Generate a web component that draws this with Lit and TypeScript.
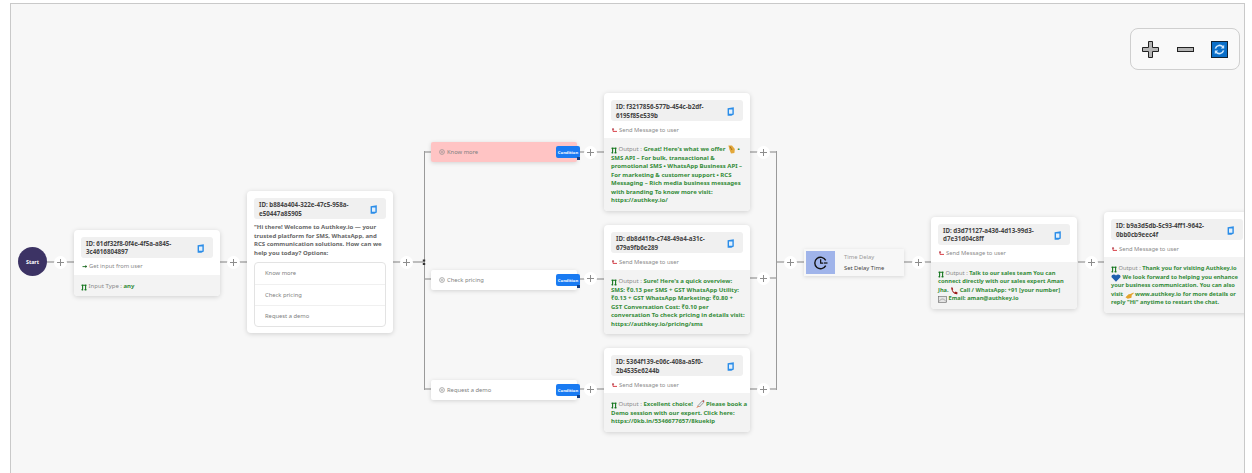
import { LitElement, html, css, svg } from "lit";
import { customElement } from "lit/decorators.js";

const copyIcon = svg`<svg class="copy" width="8" height="9" viewBox="0 0 8 9"><path d="M.6 1.2 L6.8 .2 V7.6 L4.4 8.8 H.6 Z" fill="#2b8de8"/><path d="M2 2.4 H5.4 V6.8 H2 Z" fill="#e3f0fc"/></svg>`;
const sendIcon = svg`<svg class="tiny" width="6" height="5" viewBox="0 0 6 5"><path d="M1 0.8 V3.4 H5" stroke="#d8444c" stroke-width="1" fill="none"/><path d="M1 .1 L2.3 1.5 H-.2 Z" fill="#a31d2a"/></svg>`;
const getIcon = svg`<svg class="tiny" width="6" height="5" viewBox="0 0 6 5"><path d="M.5 2.6 H4" stroke="#2e7d32" stroke-width="1"/><path d="M3.4 1 L5.2 2.6 L3.4 4 Z" fill="#1b5e20"/></svg>`;
const outIcon = svg`<svg class="tiny" width="6" height="7" viewBox="0 0 6 7"><path d="M1.6 .6 V6.4 M4.6 .6 V6.4 M.4 1.2 H5.6 M.4 5.8 H2 M3.4 5.8 H5.6" stroke="#15761f" stroke-width="1.1" fill="none"/></svg>`;
const gearIcon = svg`<svg class="gear" width="6" height="6" viewBox="0 0 7 7"><circle cx="3.5" cy="3.5" r="2.8" fill="none" stroke="#8c8c8c" stroke-width=".8"/><circle cx="3.5" cy="3.5" r="1" fill="none" stroke="#8c8c8c" stroke-width=".6"/></svg>`;
const handIcon = svg`<svg class="emoji" width="9" height="9" viewBox="0 0 9 9"><path d="M1.4 .6 L5 .6 L7.8 4 L7.4 8 L4 8.4 L2.6 5 Z" fill="#e3a83b"/><path d="M3 1.5 L5 5" stroke="#8c5a12" stroke-width=".7"/></svg>`;
const rocketIcon = svg`<svg class="emoji" width="10" height="9" viewBox="0 0 10 9"><path d="M3 5.6 L7 1.2 L9 .6 L8.6 2.6 L4.4 7 Z" fill="#e9ecf0" stroke="#555" stroke-width=".5"/><path d="M7.4 .9 L9 .6 L8.7 2.2 Z" fill="#d33"/><path d="M1.2 8 L3 5.8 L3.9 6.7 Z" fill="#e8622a"/></svg>`;
const phoneIcon = svg`<svg class="emoji" width="8" height="8" viewBox="0 0 8 8"><path d="M1 .6 L2.6 .4 L3.2 2.4 L2.4 3 Q3.2 4.6 4.8 5.4 L5.6 4.6 L7.6 5.4 L7.2 7.2 Q2 7.6 1 .6 Z" fill="#9e1b1b"/></svg>`;
const mailIcon = svg`<svg class="emoji" width="9" height="7" viewBox="0 0 9 7"><rect x=".4" y=".6" width="8.2" height="5.8" fill="#e4e4e4" stroke="#666" stroke-width=".6"/><path d="M.6 5.8 L3.4 3 H5.6 L8.4 5.8" fill="none" stroke="#777" stroke-width=".5"/></svg>`;
const heartIcon = svg`<svg class="emoji" width="10" height="8" viewBox="0 0 10 8"><path d="M5 7.8 L.4 3 Q.2 .6 2.6 .4 Q4.2 .3 5 1.4 Q5.8 .3 7.4 .4 Q9.8 .6 9.6 3 Z" fill="#1f5fae"/></svg>`;
const handRIcon = svg`<svg class="emoji" width="9" height="7" viewBox="0 0 10 8"><path d="M.4 6 L4 2.6 L6 2.4 L9.6 .6 L9.8 1.6 L7.6 3.4 L7.2 6.6 L3 7.6 Z" fill="#e3a32e"/></svg>`;
const clockIcon = svg`<svg width="14" height="14" viewBox="0 0 16 16"><path d="M13.4 5 A6.6 6.6 0 1 0 13.4 11" fill="none" stroke="#111" stroke-width="1.6"/><path d="M7.6 3.8 V8.2 H10.6" fill="none" stroke="#111" stroke-width="1.4"/><path d="M11.4 8 H15.4" stroke="#111" stroke-width="1.4"/></svg>`;

type Msg = { x: number; y: number; id: string[]; sub: any; subText: string; body?: any; small?: boolean };

const messages: Msg[] = [
  { x: 74, y: 229.5, id: ["61df32f8-0f4e-4f5a-a845-", "3c4616804897"], sub: getIcon, subText: "Get input from user",
    body: html`${outIcon} <span class="lab">Input Type : </span><b>any</b>` },
  { x: 604, y: 93, id: ["f3217856-577b-454c-b2df-", "6195f85e539b"], sub: sendIcon, subText: "Send Message to user",
    body: html`${outIcon} <span class="lab">Output : </span><b>Great! Here's what we offer ${handIcon} •<br>SMS API – For bulk, transactional &amp;<br>promotional SMS • WhatsApp Business API –<br>For marketing &amp; customer support • RCS<br>Messaging – Rich media business messages<br>with branding To know more visit:<br>https://authkey.io/</b>` },
  { x: 604, y: 225, id: ["db8d41fa-c748-49a4-a31c-", "679a9fb6e289"], sub: sendIcon, subText: "Send Message to user",
    body: html`${outIcon} <span class="lab">Output : </span><b>Sure! Here's a quick overview:<br>SMS: ₹0.13 per SMS + GST WhatsApp Utility:<br>₹0.13 + GST WhatsApp Marketing: ₹0.80 +<br>GST Conversation Cost: ₹0.10 per<br>conversation To check pricing in details visit:<br>https://authkey.io/pricing/sms</b>` },
  { x: 604, y: 348, id: ["5364f139-e06c-408a-a5f0-", "2b4535e6244b"], sub: sendIcon, subText: "Send Message to user",
    body: html`${outIcon} <span class="lab">Output : </span><b>Excellent choice! ${rocketIcon} Please book a<br>Demo session with our expert. Click here:<br>https://0kb.in/5346677657/8kuekip</b>` },
  { x: 931, y: 216.5, small: true, id: ["d3d71127-a436-4d13-99d3-", "d7e31d04c8ff"], sub: sendIcon, subText: "Send Message to user",
    body: html`${outIcon} <span class="lab">Output : </span><b>Talk to our sales team You can<br>connect directly with our sales expert Aman<br>Jha. ${phoneIcon} Call / WhatsApp: +91 [your number]<br>${mailIcon} Email: aman@authkey.io</b>` },
  { x: 1104, y: 212, small: true, id: ["b9a3d5db-5c93-4ff1-9642-", "0bb0cb9eec4f"], sub: sendIcon, subText: "Send Message to user",
    body: html`${outIcon} <span class="lab">Output : </span><b>Thank you for visiting Authkey.io<br>${heartIcon} We look forward to helping you enhance<br>your business communication. You can also<br>visit ${handRIcon} www.authkey.io for more details or<br>reply "Hi" anytime to restart the chat.</b>` },
];

const conditions = [
  { y: 142, label: "Know more", cls: "cond pink" },
  { y: 270, label: "Check pricing", cls: "cond" },
  { y: 380, label: "Request a demo", cls: "cond" },
];

const pluses: [number, number][] = [
  [60, 262], [233, 262], [406, 262], [590, 152], [590, 278], [590, 389],
  [763, 152], [763, 278], [763, 389], [790, 262], [918, 262], [1091, 262],
];

// coordinates are relative to the page, the canvas sits at (10,3)
const CX = 10;
const CY = 3;

@customElement("app-root")
export class AppRoot extends LitElement {
  static styles = css`
    :host { display: block; width: 1252px; height: 473px; overflow: hidden; background: #fff;
      font-family: "Noto Sans", "Open Sans", sans-serif; }
    .canvas { position: relative; margin: 3px 0 0 10px; width: 1235px; height: 470px; overflow: hidden;
      background: #f7f7f7; border: 1px solid #c9c9c9; border-bottom: 0; box-sizing: border-box; }
    .wires { position: absolute; left: -1px; top: -1px; }
    .node { position: absolute; }
    .start { width: 29px; height: 29px; border-radius: 50%; background: #3c3364; color: #fff;
      display: flex; align-items: center; justify-content: center; font-size: 5.3px; font-weight: 700; }
    .plus { width: 13px; height: 13px; border-radius: 50%; background: #fff; display: flex;
      align-items: center; justify-content: center; }
    .card { width: 146px; background: #fff; border-radius: 4px; box-shadow: 0 1px 5px rgba(0,0,0,.16);
      overflow: hidden; }
    .top { padding: 7px 7px 0; }
    .idbox { background: #f0f0f0; border-radius: 3px; display: flex; align-items: center;
      justify-content: space-between; padding: 3px 8px 1px 5px; font-size: 6.2px; line-height: 8.5px;
      font-weight: 700; color: #444; white-space: nowrap; }
    .copy { flex: none; }
    .sub { font-size: 5.8px; line-height: 9px; color: #8a8a8a; padding: 4.5px 0 3.5px 1px; white-space: nowrap;
      display: flex; align-items: center; gap: 1px; }
    .out { background: #f3f3f3; padding: 7px 7px 6px; font-size: 6px; line-height: 8.5px;
      color: #8a8a8a; white-space: nowrap; }
    .small .out { font-size: 5.72px; }
    .out b { font-weight: 700; color: #338c39; }
    .out .lab { font-weight: 400; }
    .tiny, .emoji { vertical-align: -1px; margin: -2px 0; }
    .prompt { font-size: 6px; line-height: 8.7px; font-weight: 700; color: #666; white-space: nowrap;
      padding: 4px 0 4px; }
    .opts { border: 1px solid #e3e3e3; border-radius: 4px; background: #fff; }
    .opt { height: 21px; box-sizing: border-box; padding-left: 10px; display: flex; align-items: center;
      font-size: 5.8px; color: #808080; }
    .opt + .opt { border-top: 1px solid #f0f0f0; }
    .pad { height: 6px; }
    .cond { width: 146px; height: 20px; background: #fff; border-radius: 2px; box-shadow: 0 1px 4px rgba(0,0,0,.15);
      display: flex; align-items: center; padding-left: 8px; box-sizing: border-box; font-size: 5.8px; color: #808080; gap: 2px; }
    .pink { background: #ffc4c4; }
    .badge { position: absolute; left: 125px; top: 4px; width: 24px; height: 12px; background: #1a7bf2;
      border-radius: 2px; color: #fff; font-size: 4.2px; font-weight: 700; display: flex;
      align-items: center; justify-content: center; }
    .badge::after { content: ""; position: absolute; right: 0; bottom: -2px; width: 3px; height: 3px; background: #123f86; }
    .delay { width: 100px; height: 27px; box-sizing: border-box; background: #f7f7f7; box-shadow: 0 1px 4px rgba(0,0,0,.13);
      padding: 2px; display: flex; gap: 9px; align-items: stretch; }
    .delay .ic { width: 29px; background: #a0b4ea; display: flex; align-items: center; justify-content: center; }
    .delay .txt { display: flex; flex-direction: column; justify-content: center; gap: 3px; font-size: 5.8px; line-height: 8px; color: #444; }
    .delay .txt span:first-child { color: #999; }
    .zoom { position: absolute; left: 1119px; top: 24px; width: 110px; height: 42px; box-sizing: border-box;
      border: 1px solid #cfcfcf; border-radius: 8px; background: #f9f9f9; display: flex; align-items: center;
      padding-left: 11px; }
    .zoom svg { display: block; }
    .zoom .minus { margin-left: 18px; }
    .zoom .refresh { margin-left: 17px; }
  `;

  private card(m: Msg, extra?: any) {
    return html`<div class="node card ${m.small ? "small" : ""}" style="left:${m.x - CX - 1}px;top:${m.y - CY - 1}px">
      <div class="top">
        <div class="idbox"><span>ID: ${m.id[0]}<br>${m.id[1]}</span>${copyIcon}</div>
        ${extra ?? html`<div class="sub">${m.sub}<span>${m.subText}</span></div>`}
      </div>
      ${m.body ? html`<div class="out">${m.body}</div>` : ""}
    </div>`;
  }

  render() {
    const h = "#bdbdbd";
    const v = "#9a9a9a";
    return html`<div class="canvas">
      <svg class="wires" width="1236" height="471" viewBox="${CX} ${CY} 1236 471">
        <g stroke="${h}" stroke-width="2" fill="none">
          <path d="M47 262 H74 M220 262 H247 M393 262 H424" />
          <path d="M424 152 H431 M424 279 H431 M424 389 H431" />
          <path d="M577 152 H604 M577 279 H604 M577 389 H604" />
          <path d="M750 152 H776 M750 278 H776 M750 389 H776" />
          <path d="M776 262 H804 M904 262 H931 M1078 262 H1104" />
        </g>
        <path d="M424.5 151 V390 M776.5 151 V390" stroke="${v}" stroke-width="1" fill="none"/>
        <path d="M424 259.5 V261.5 M424 263 V265" stroke="#333" stroke-width="2.4" fill="none"/>
      </svg>

      <div class="node start" style="left:${18 - CX - 1}px;top:${247 - CY - 1}px">Start</div>

      ${this.card(messages[0])}

      ${this.card({ x: 247, y: 191, id: ["b884a404-322e-47c5-958a-", "e50447a85905"], sub: null, subText: "" },
        html`<div class="prompt">"Hi there! Welcome to Authkey.io — your<br>trusted platform for SMS, WhatsApp, and<br>RCS communication solutions. How can we<br>help you today? Options:</div>
        <div class="opts"><div class="opt">Know more</div><div class="opt">Check pricing</div><div class="opt">Request a demo</div></div><div class="pad"></div>`)}

      ${conditions.map(c => html`<div class="node ${c.cls}" style="left:${431 - CX - 1}px;top:${c.y - CY - 1}px">
        ${gearIcon}<span>${c.label}</span><div class="badge">Condition</div></div>`)}

      ${messages.slice(1).map(m => this.card(m))}

      <div class="node delay" style="left:${804 - CX - 1}px;top:${249 - CY - 1}px">
        <div class="ic">${clockIcon}</div>
        <div class="txt"><span>Time Delay</span><span>Set Delay Time</span></div>
      </div>

      ${pluses.map(([x, y]) => html`<div class="node plus" style="left:${x - 6.5 - CX - 1}px;top:${y - 6.5 - CY - 1}px">
        <svg width="7" height="7" viewBox="0 0 7 7"><path d="M3.5 0 V7 M0 3.5 H7" stroke="#8c8c8c" stroke-width="1"/></svg></div>`)}

      <div class="zoom">
        <svg width="17" height="17" viewBox="0 0 17 17"><path d="M6.5 .5 H10.5 V6.5 H16.5 V10.5 H10.5 V16.5 H6.5 V10.5 H.5 V6.5 H6.5 Z" fill="#b5b5b5" stroke="#222" stroke-width="1"/></svg>
        <svg class="minus" width="17" height="5" viewBox="0 0 17 5"><rect x=".5" y=".5" width="16" height="4" fill="#b5b5b5" stroke="#222" stroke-width="1"/></svg>
        <svg class="refresh" width="17" height="17" viewBox="0 0 17 17"><rect x=".5" y=".5" width="16" height="16" fill="#0a6fc9" stroke="#123" stroke-width="1"/><path d="M4.4 7.6 A4.4 4.4 0 0 1 12 6" fill="none" stroke="#cfe8ff" stroke-width="1.6"/><path d="M12.6 9.4 A4.4 4.4 0 0 1 5 11" fill="none" stroke="#cfe8ff" stroke-width="1.6"/><path d="M13.2 3.8 V7.4 H9.8 Z M3.8 13.2 V9.6 H7.2 Z" fill="#cfe8ff"/></svg>
      </div>
    </div>`;
  }
}
